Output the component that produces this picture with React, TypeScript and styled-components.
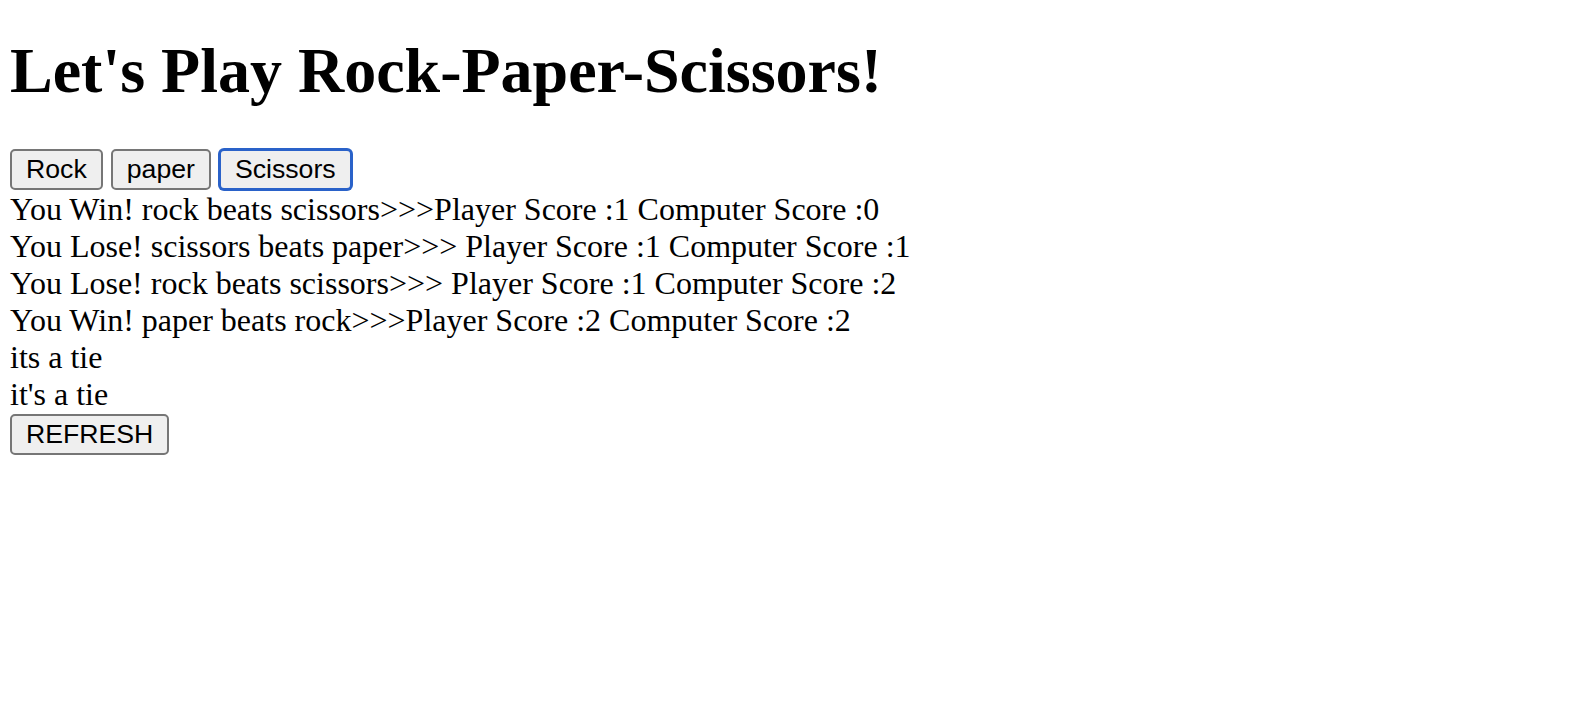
import React from "react";
import styled, { createGlobalStyle } from "styled-components";

const GlobalStyle = createGlobalStyle`
  html, body {
    margin: 0;
    padding: 0;
    background: #ffffff;
  }
  body {
    padding: 0 10px;
    font-family: "Liberation Serif", "Times New Roman", serif;
    font-size: 32px;
    color: #000000;
  }
`;

const Page = styled.div`
  display: block;
`;

const Title = styled.h1`
  font-family: "Liberation Serif", "Times New Roman", serif;
  font-size: 64px;
  font-weight: bold;
  margin: 34px 0 40.5px 0;
`;

const ButtonRow = styled.div`
  font-size: 32px;
`;

const ChoiceButton = styled.button<{ $focused?: boolean }>`
  font-family: "Liberation Sans", Arial, sans-serif;
  font-size: 26.67px;
  line-height: normal;
  color: #000000;
  background: #efefef;
  border: 2px solid ${(p) => (p.$focused ? "#2a62c9" : "#767676")};
  box-shadow: ${(p) => (p.$focused ? "0 0 0 1px #2a62c9" : "none")};
  border-radius: 5px;
  padding: 3px 14px;
  margin: 0;
  cursor: pointer;
`;

const Results = styled.div`
  margin-top: 1px;
`;

const ResultLine = styled.div`
  font-size: 32px;
  line-height: normal;
`;

const RefreshRow = styled(ButtonRow)`
  margin-top: 1px;
`;

const results = [
  "You Win! rock beats scissors>>>Player Score :1 Computer Score :0",
  "You Lose! scissors beats paper>>> Player Score :1 Computer Score :1",
  "You Lose! rock beats scissors>>> Player Score :1 Computer Score :2",
  "You Win! paper beats rock>>>Player Score :2 Computer Score :2",
  "its a tie",
  "it's a tie",
];

export default function App() {
  return (
    <Page>
      <GlobalStyle />
      <Title>Let's Play Rock-Paper-Scissors!</Title>
      <ButtonRow>
        <ChoiceButton>Rock</ChoiceButton> <ChoiceButton>paper</ChoiceButton>{" "}
        <ChoiceButton $focused>Scissors</ChoiceButton>
      </ButtonRow>
      <Results>
        {results.map((r, i) => (
          <ResultLine key={i}>{r}</ResultLine>
        ))}
      </Results>
      <RefreshRow>
        <ChoiceButton>REFRESH</ChoiceButton>
      </RefreshRow>
    </Page>
  );
}
